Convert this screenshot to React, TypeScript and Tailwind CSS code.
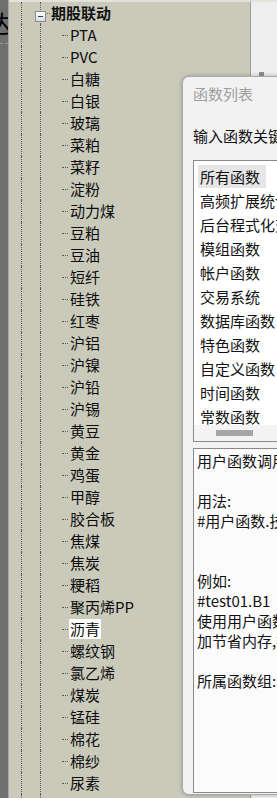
import React from 'react';

const futures = [
  'PTA', 'PVC', '白糖', '白银', '玻璃', '菜粕', '菜籽', '淀粉', '动力煤', '豆粕', '豆油', '短纤',
  '硅铁', '红枣', '沪铝', '沪镍', '沪铅', '沪锡', '黄豆', '黄金', '鸡蛋', '甲醇', '胶合板', '焦煤',
  '焦炭', '粳稻', '聚丙烯PP', '沥青', '螺纹钢', '氯乙烯', '煤炭', '锰硅', '棉花', '棉纱', '尿素',
];

const funcGroups = [
  '所有函数', '高频扩展统计函数', '后台程式化交易', '模组函数', '帐户函数', '交易系统',
  '数据库函数', '特色函数', '自定义函数', '时间函数', '常数函数',
];

const helpLines = [
  '用户函数调用用户自定义的函数',
  '',
  '用法:',
  '#用户函数.技术指标名称',
  '',
  '',
  '例如:',
  '#test01.B1',
  '使用用户函数可以更',
  '加节省内存,提高效率',
  '',
  '所属函数组:自定义函数',
];

const font = "font-['Noto_Sans_CJK_SC','Noto_Sans',sans-serif]";

function TreeRow({ label, selected }: { label: string; selected?: boolean }) {
  return (
    <div className="flex h-[22px] items-center">
      <div className="w-[12px] shrink-0" />
      <div className="w-[19px] h-full shrink-0 border-l border-dotted border-[#5a5a5a]" />
      <div className="w-[22px] h-full shrink-0 border-l border-dotted border-[#5a5a5a]" />
      <div className="w-[6px] shrink-0 border-t border-dotted border-[#5a5a5a]" />
      <span
        className={`ml-[1px] px-[1px] leading-[20px] whitespace-nowrap text-[15px] text-[#0c0c0c] ${
          selected ? 'bg-white' : ''
        }`}
      >
        {label}
      </span>
    </div>
  );
}

export default function App() {
  return (
    <div className={`relative flex w-[277px] h-[798px] overflow-hidden bg-[#6f6f6f] ${font}`}>
      {/* left edge of the window behind */}
      <div className="w-[8px] shrink-0 overflow-hidden flex flex-col">
        <span className="mt-[9px] ml-[-13px] text-[24px] leading-[28px] text-black">达</span>
        <div className="mt-[6px] h-px w-full border-t border-dashed border-[#9a9a9a]" />
      </div>
      <div className="w-px shrink-0 bg-[#a9a9a9]" />

      {/* tree panel */}
      <div className="w-[241px] shrink-0 bg-[#cacabb] border-t-2 border-[#e2e2da] flex flex-col">
        <div className="flex h-[22px]">
          <div className="w-[12px] shrink-0" />
          <div className="w-[19px] h-full shrink-0 border-l border-dotted border-[#5a5a5a]" />
          <div className="relative flex-1 h-full border-l border-dotted border-[#5a5a5a] flex items-center">
            <div className="absolute left-[-6px] top-[9px] w-[11px] h-[11px] border border-[#8c8c8c] bg-gradient-to-b from-white to-[#dcdcdc] flex items-center justify-center">
              <div className="w-[5px] h-px bg-[#1f3f7a]" />
            </div>
            <div className="ml-[6px] w-[3px] border-t border-dotted border-[#5a5a5a]" />
            <span className="ml-[1px] text-[15px] font-bold leading-[20px] text-[#111] whitespace-nowrap">
              期股联动
            </span>
          </div>
        </div>
        {futures.map((f) => (
          <TreeRow key={f} label={f} selected={f === '沥青'} />
        ))}
        <div className="flex flex-1">
          <div className="w-[12px] shrink-0" />
          <div className="w-[19px] shrink-0 border-l border-dotted border-[#5a5a5a]" />
          <div className="w-[22px] shrink-0 border-l border-dotted border-[#5a5a5a]" />
        </div>
      </div>

      {/* right window behind */}
      <div className="relative flex-1 bg-[#eeeeee] border-l border-t-2 border-[#9d9d9d] border-t-[#e2e2da]">
        <div className="absolute left-[8px] top-[70px] w-[5px] h-[5px] bg-[#8e8e8e]" />
      </div>

      {/* dialog */}
      <div className="absolute left-[182px] top-[76px] w-[120px] h-[719px] rounded-[7px] border border-[#a8a8a8] bg-[#f2f2f2] shadow-[0_0_4px_rgba(0,0,0,0.25)] flex flex-col pl-[10px]">
        <div className="mt-[7px] h-[20px] text-[15px] leading-[20px] text-[#9f9f9f] whitespace-nowrap">函数列表</div>
        <div className="mt-[22px] h-[20px] text-[15px] leading-[20px] text-[#111] whitespace-nowrap">输入函数关键字</div>

        <div className="mt-[14px] h-[282px] border border-[#8a8a8a] bg-white flex flex-col">
          <div className="h-[264px] overflow-hidden pt-[3px] pl-[4px]">
            {funcGroups.map((g, i) => (
              <div key={g} className="h-[24px] flex items-center">
                <span
                  className={`px-[2px] pr-[6px] h-[23px] leading-[23px] text-[15px] text-[#111] whitespace-nowrap ${
                    i === 0 ? 'bg-[#e6e6e6]' : ''
                  }`}
                >
                  {g}
                </span>
              </div>
            ))}
          </div>
          <div className="h-[16px] bg-[#f4f4f4] flex items-center">
            <div className="ml-[22px] w-[37px] h-[6px] bg-[#a6a6a6]" />
          </div>
        </div>

        <div className="mt-[6px] flex-1 mb-[1px] border border-[#8a8a8a] bg-[#fbfbfb] pt-[2px] pl-[3px]">
          {helpLines.map((l, i) => (
            <div key={i} className="h-[20px] text-[15px] leading-[20px] text-[#111] whitespace-nowrap">
              {l}
            </div>
          ))}
        </div>
      </div>
    </div>
  );
}
